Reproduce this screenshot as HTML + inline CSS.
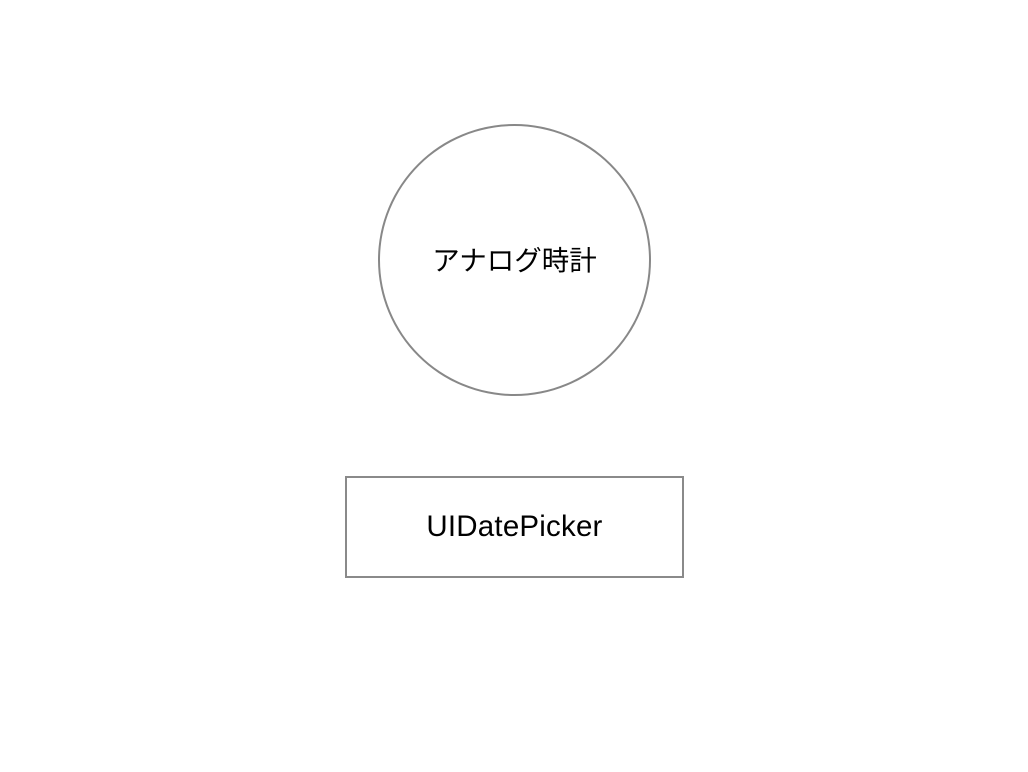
<!DOCTYPE html>
<html><head><meta charset="utf-8"><style>
html,body{margin:0;padding:0;background:#fff;width:1028px;height:772px;overflow:hidden;position:relative}
.c{position:absolute;left:378px;top:124px;width:269px;height:268px;border:2px solid #888;border-radius:50%;box-sizing:content-box}
.t1{position:absolute;left:378px;width:273px;top:243px;text-align:center;font:27.5px "Liberation Sans","Noto Sans CJK JP",sans-serif;color:#000;line-height:36px}
.r{position:absolute;left:345px;top:476px;width:335px;height:98px;border:2px solid #8a8a8a}
.t2{position:absolute;left:345px;width:339px;top:509px;text-align:center;font:29.5px "Liberation Sans",sans-serif;color:#000;line-height:36px;letter-spacing:0.2px}
</style></head><body>
<div class="c"></div>
<div class="t1">アナログ時計</div>
<div class="r"></div>
<div class="t2">UIDatePicker</div>
</body></html>
